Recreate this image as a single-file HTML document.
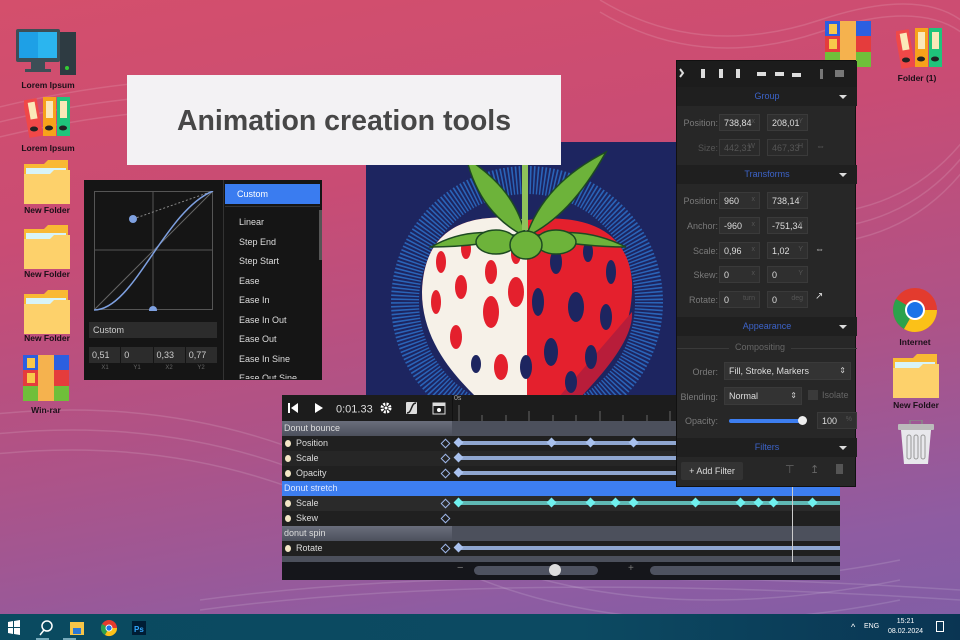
<!DOCTYPE html>
<html><head><meta charset="utf-8"><style>
*{margin:0;padding:0;box-sizing:border-box}
body{width:960px;height:640px;overflow:hidden;position:relative;font-family:"Liberation Sans",sans-serif;
background:linear-gradient(170deg,#d44f6c 0%,#c94c74 30%,#ad5388 60%,#8e5ca2 85%,#7f5ea6 100%)}
.a{position:absolute}
.lbl{position:absolute;font-size:8.5px;font-weight:bold;color:#1a0f18;text-align:center;width:80px;white-space:nowrap}
.dk{background:#151515}
.rp .l{position:absolute;left:0;width:41px;text-align:right;font-size:9px;color:#7a7a7a}
.in{position:absolute;height:17px;background:#2f2f2f;border:1px solid #3a3a3a;font-size:9px;color:#ddd;padding:3px 4px}
.in span{position:absolute;right:4px;top:3px;color:#555;font-size:7px}
.hd{position:absolute;left:0;width:180px;height:19px;background:#1f1f1f;color:#3c63c8;font-size:9px;text-align:center;line-height:19px}
.hd:after{content:"";position:absolute;right:10px;top:8px;border:4px solid transparent;border-top:4px solid #ddd}
.row{position:absolute;left:0;width:558px;height:15px}
.row .n{position:absolute;left:0;width:170px;height:15px;font-size:9px;color:#ddd;line-height:15px;padding-left:14px}
.row .n i{position:absolute;left:3px;top:4px;width:6px;height:7px;border-radius:50%;background:#f3e6c6}
.row .d{position:absolute;left:160px;top:4px;width:7px;height:7px;border:1.5px solid #9fb7e8;transform:rotate(45deg)}
.grp .n{background:linear-gradient(#6a6e7c,#4c505c);padding-left:2px}
.kf{position:absolute;width:7px;height:7px;transform:rotate(45deg);background:#a9c1ee}
.ease div{height:19.5px;line-height:19.5px;font-size:9px;color:#ddd;padding-left:14px}
</style></head><body>

<svg class="a" style="left:0;top:0" width="960" height="614">
<g fill="none" stroke="#fff" stroke-opacity="0.13" stroke-width="1.5">
<path d="M-50 120 Q300 20 600 160 T1000 80"/><path d="M-50 135 Q300 35 600 175 T1000 95"/>
<path d="M-50 150 Q300 50 600 190 T1000 110"/><path d="M-50 420 Q200 380 400 500 T900 560"/>
<path d="M-50 440 Q200 400 400 520 T900 580"/><path d="M-50 460 Q200 420 400 540 T900 600"/>
<path d="M600 0 Q700 60 820 20 T980 40"/><path d="M600 12 Q700 72 820 32 T980 52"/>
<path d="M200 600 Q500 560 960 590"/><path d="M200 610 Q500 570 960 600"/>
</g></svg>

<svg class="a" style="left:16px;top:27px" width="62" height="50">
<rect x="0" y="2" width="44" height="33" rx="2" fill="#3d4e56"/><rect x="3" y="5" width="38" height="26" fill="#1ea0e6"/><rect x="22" y="5" width="19" height="26" fill="#2bb5ef"/>
<rect x="15" y="35" width="14" height="8" fill="#3d4e56"/><rect x="9" y="42" width="26" height="3" fill="#3d4e56"/>
<rect x="44" y="5" width="16" height="43" fill="#2e3b42"/><circle cx="51" cy="41" r="2" fill="#3c3"/></svg>
<div class="lbl" style="left:8px;top:80px">Lorem Ipsum</div>
<svg class="a" style="left:24px;top:96px" width="50" height="42">
<rect x="2" y="3" width="14" height="38" fill="#f04848" transform="rotate(-10 9 22)"/><rect x="19" y="1" width="13" height="39" fill="#f7a21b"/><rect x="33" y="1" width="13" height="39" fill="#1fc47b"/>
<rect x="22" y="5" width="7" height="17" fill="#fbe8b8"/><rect x="36" y="5" width="7" height="17" fill="#fbe8b8"/><rect x="5" y="6" width="7" height="17" fill="#fbe8b8" transform="rotate(-10 9 14)"/>
<ellipse cx="25" cy="32" rx="4" ry="2.5" fill="#222"/><ellipse cx="39" cy="32" rx="4" ry="2.5" fill="#222"/><ellipse cx="10" cy="33" rx="4" ry="2.5" fill="#222"/></svg>
<div class="lbl" style="left:8px;top:143px">Lorem Ipsum</div>
<svg class="a" style="left:24px;top:160px" width="46" height="44"><path d="M0 4h20l4-4h20v42H0z" fill="#f9b934"/><rect x="2" y="8" width="40" height="8" fill="#d8f4f8"/><path d="M0 14h26l4-4h16v34H0z" fill="#fdd16b"/></svg>
<div class="lbl" style="left:7px;top:205px">New Folder</div>
<svg class="a" style="left:24px;top:225px" width="46" height="44"><path d="M0 4h20l4-4h20v42H0z" fill="#f9b934"/><rect x="2" y="8" width="40" height="8" fill="#d8f4f8"/><path d="M0 14h26l4-4h16v34H0z" fill="#fdd16b"/></svg>
<div class="lbl" style="left:7px;top:269px">New Folder</div>
<svg class="a" style="left:24px;top:290px" width="46" height="44"><path d="M0 4h20l4-4h20v42H0z" fill="#f9b934"/><rect x="2" y="8" width="40" height="8" fill="#d8f4f8"/><path d="M0 14h26l4-4h16v34H0z" fill="#fdd16b"/></svg>
<div class="lbl" style="left:7px;top:333px">New Folder</div>
<svg class="a" style="left:23px;top:355px" width="46" height="46"><rect width="46" height="15" fill="#2c5fe0"/><rect y="15" width="46" height="16" fill="#e53c3c"/><rect y="31" width="46" height="15" fill="#6fbf3a"/><rect x="15" width="16" height="46" fill="#f5b24e"/><rect x="4" y="3" width="8" height="10" fill="#f8c84a"/><rect x="4" y="18" width="8" height="10" fill="#f8c84a"/></svg>
<div class="lbl" style="left:6px;top:405px">Win-rar</div>

<svg class="a" style="left:825px;top:21px" width="46" height="46"><rect width="46" height="15" fill="#2c5fe0"/><rect y="15" width="46" height="16" fill="#e53c3c"/><rect y="31" width="46" height="15" fill="#6fbf3a"/><rect x="15" width="16" height="46" fill="#f5b24e"/><rect x="4" y="3" width="8" height="10" fill="#f8c84a"/><rect x="4" y="18" width="8" height="10" fill="#f8c84a"/></svg>
<svg class="a" style="left:896px;top:27px" width="50" height="42">
<rect x="2" y="3" width="14" height="38" fill="#f04848" transform="rotate(-10 9 22)"/><rect x="19" y="1" width="13" height="39" fill="#f7a21b"/><rect x="33" y="1" width="13" height="39" fill="#1fc47b"/>
<rect x="22" y="5" width="7" height="17" fill="#fbe8b8"/><rect x="36" y="5" width="7" height="17" fill="#fbe8b8"/><rect x="5" y="6" width="7" height="17" fill="#fbe8b8" transform="rotate(-10 9 14)"/>
<ellipse cx="25" cy="32" rx="4" ry="2.5" fill="#222"/><ellipse cx="39" cy="32" rx="4" ry="2.5" fill="#222"/><ellipse cx="10" cy="33" rx="4" ry="2.5" fill="#222"/></svg>
<div class="lbl" style="left:877px;top:73px">Folder (1)</div>
<svg class="a" style="left:892px;top:287px" width="46" height="46"><circle cx="23" cy="23" r="22" fill="#e33b2e"/><path d="M23 23L4 12A22 22 0 0 0 12 42z" fill="#2ba24c"/><path d="M23 23L12 42A22 22 0 0 0 45 23z" fill="#fbc118"/><circle cx="23" cy="23" r="10" fill="#fff"/><circle cx="23" cy="23" r="8" fill="#1a73e8"/></svg>
<div class="lbl" style="left:875px;top:337px">Internet</div>
<svg class="a" style="left:893px;top:354px" width="46" height="44"><path d="M0 4h20l4-4h20v42H0z" fill="#f9b934"/><rect x="2" y="8" width="40" height="8" fill="#d8f4f8"/><path d="M0 14h26l4-4h16v34H0z" fill="#fdd16b"/></svg>
<div class="lbl" style="left:876px;top:400px">New Folder</div>
<svg class="a" style="left:897px;top:420px" width="40" height="45"><rect x="13" y="0" width="12" height="5" fill="none" stroke="#888" stroke-width="1.5"/><rect x="1" y="4" width="36" height="6" rx="1" fill="#bbb"/><path d="M4 10h30l-3 34H7z" fill="#e8e8ec"/><rect x="10" y="15" width="4" height="24" rx="2" fill="none" stroke="#999"/><rect x="17" y="15" width="4" height="24" rx="2" fill="none" stroke="#999"/><rect x="24" y="15" width="4" height="24" rx="2" fill="none" stroke="#999"/></svg>

<svg class="a" style="left:366px;top:142px" width="310" height="255">
<rect width="310" height="255" fill="#1d2560"/>
<circle cx="161" cy="160" r="122" fill="none" stroke="#2d70c8" stroke-width="28" stroke-dasharray="1.5 2" opacity="0.85"/>
<path d="M161 78 C110 70 58 80 56 150 C56 210 110 255 130 270 L200 270 C230 240 268 200 266 140 C262 82 210 72 161 78z" fill="#e4202d"/>
<path d="M161 78 C110 70 58 80 56 150 C56 200 90 235 110 255 L161 255z" fill="#f6f1e8"/>
<path d="M200 270 C230 240 268 200 266 170 L180 270z" fill="#b81d3a"/>
<g fill="#e4202d"><ellipse cx="75" cy="120" rx="5" ry="11"/><ellipse cx="100" cy="107" rx="5" ry="10"/><ellipse cx="70" cy="160" rx="5" ry="12"/><ellipse cx="95" cy="145" rx="6" ry="12"/><ellipse cx="125" cy="130" rx="6" ry="12"/><ellipse cx="150" cy="112" rx="5" ry="10"/><ellipse cx="125" cy="170" rx="8" ry="16"/><ellipse cx="90" cy="195" rx="6" ry="12"/><ellipse cx="135" cy="225" rx="7" ry="13"/><ellipse cx="150" cy="150" rx="8" ry="15"/></g>
<g fill="#1d2560"><ellipse cx="190" cy="120" rx="6" ry="12"/><ellipse cx="222" cy="110" rx="5" ry="10"/><ellipse cx="245" cy="130" rx="5" ry="12"/><ellipse cx="172" cy="160" rx="6" ry="14"/><ellipse cx="210" cy="165" rx="8" ry="15"/><ellipse cx="240" cy="175" rx="6" ry="13"/><ellipse cx="185" cy="210" rx="7" ry="14"/><ellipse cx="225" cy="215" rx="6" ry="12"/><ellipse cx="160" cy="225" rx="6" ry="12"/><ellipse cx="110" cy="222" rx="5" ry="9"/><ellipse cx="205" cy="240" rx="6" ry="11"/></g>
<g fill="#6db33a" stroke="#1d4a22" stroke-width="1.5">
<path d="M160 95 C130 80 110 55 100 15 C120 30 150 50 160 95z"/><path d="M160 95 C190 80 215 55 240 10 C210 25 175 50 160 95z"/>
<path d="M160 95 C130 90 100 85 65 105 C100 105 130 100 160 95z"/><path d="M160 95 C190 90 220 85 260 105 C225 105 190 100 160 95z"/>
<ellipse cx="130" cy="100" rx="20" ry="12"/><ellipse cx="190" cy="100" rx="20" ry="12"/><ellipse cx="160" cy="103" rx="16" ry="14"/></g>
<rect x="156" y="0" width="6" height="88" fill="#8fc25a"/>
</svg>

<div class="a" style="left:127px;top:75px;width:434px;height:90px;background:#f3f2f4;font-size:28.5px;font-weight:bold;color:#474747;text-align:center;line-height:92px">Animation creation tools</div>

<div class="a dk" style="left:84px;top:180px;width:238px;height:200px">
<svg class="a" style="left:10px;top:11px" width="120" height="120">
<rect x="0.5" y="0.5" width="118" height="118" fill="none" stroke="#555"/><line x1="59" y1="0" x2="59" y2="119" stroke="#555"/><line x1="0" y1="59" x2="119" y2="59" stroke="#555"/>
<line x1="0" y1="119" x2="119" y2="0" stroke="#666"/><line x1="39" y1="28" x2="119" y2="0" stroke="#888" stroke-dasharray="2 2"/>
<path d="M0 119 C40 119 70 20 119 0" fill="none" stroke="#7ea0e0" stroke-width="1.5"/>
<circle cx="39" cy="28" r="4" fill="#7ea0e0"/><circle cx="59" cy="119" r="4" fill="#7ea0e0"/></svg>
<div class="a" style="left:5px;top:142px;width:128px;height:16px;background:#2c2c2c;font-size:9px;color:#ccc;padding:3px 4px">Custom</div>
<div class="a" style="left:5px;top:167px;width:128px;height:16px;background:#2c2c2c;font-size:9px;color:#ccc;display:flex"><span style="flex:1;padding:3px;border-right:1px solid #151515">0,51</span><span style="flex:1;padding:3px;border-right:1px solid #151515">0</span><span style="flex:1;padding:3px;border-right:1px solid #151515">0,33</span><span style="flex:1;padding:3px">0,77</span></div>
<div class="a" style="left:5px;top:185px;width:128px;font-size:6px;color:#666;display:flex;text-align:center"><span style="flex:1">X1</span><span style="flex:1">Y1</span><span style="flex:1">X2</span><span style="flex:1">Y2</span></div>
<div class="a" style="left:139px;top:0;width:1px;height:200px;background:#333"></div>
<div class="a" style="left:141px;top:4px;width:95px;height:20px;background:#3a7cf0;color:#fff;font-size:9px;line-height:20px;padding-left:12px">Custom</div>
<div class="a" style="left:141px;top:26px;width:95px;height:1px;background:#333"></div>
<div class="a ease" style="left:141px;top:33px;width:95px"><div>Linear</div><div>Step End</div><div>Step Start</div><div>Ease</div><div>Ease In</div><div>Ease In Out</div><div>Ease Out</div><div>Ease In Sine</div><div style="height:10px;overflow:hidden">Ease Out Sine</div></div>
<div class="a" style="left:235px;top:30px;width:3px;height:50px;background:#555"></div>
</div>

<div class="a" style="left:282px;top:395px;width:558px;height:185px;background:#1c1c1c;overflow:hidden">
<svg class="a" style="left:0;top:0" width="170" height="26" fill="#fff">
<rect x="6" y="8" width="2" height="10"/><path d="M16 8v10l-7-5z"/><path d="M33 8v10l8-5z"/>
<text x="54" y="17.5" font-size="11" fill="#ddd" font-family="Liberation Sans">0:01.33</text>
<circle cx="104" cy="13" r="4" fill="none" stroke="#fff" stroke-width="3" stroke-dasharray="2 1.2"/><circle cx="104" cy="13" r="1.5"/>
<rect x="124" y="7" width="11" height="12" rx="1" fill="#ddd"/><path d="M125 18C130 18 129 8 134 8" stroke="#222" fill="none" stroke-width="1.5"/>
<rect x="151" y="8" width="12" height="11" fill="none" stroke="#ddd"/><rect x="151" y="8" width="12" height="3" fill="#ddd"/><circle cx="157" cy="15" r="2"/>
</svg>
<div class="a" style="left:170px;top:0;width:1px;height:185px;background:#111"></div>
<div class="a" style="left:172px;top:0;font-size:7px;color:#aaa">0s</div>
<svg class="a" style="left:170px;top:0" width="390" height="26" stroke="#666"><line x1="7" y1="10" x2="7" y2="26"/><line x1="30" y1="20" x2="30" y2="26"/><line x1="54" y1="20" x2="54" y2="26"/><line x1="77" y1="16" x2="77" y2="26"/><line x1="101" y1="20" x2="101" y2="26"/><line x1="124" y1="20" x2="124" y2="26"/><line x1="148" y1="16" x2="148" y2="26"/><line x1="171" y1="20" x2="171" y2="26"/><line x1="195" y1="20" x2="195" y2="26"/><line x1="218" y1="16" x2="218" y2="26"/></svg>
<div class="row grp" style="top:26px;background:#4c505c"><div class="n">Donut bounce</div></div>
<div class="row" style="top:41px;background:#202020"><div class="n"><i></i>Position</div><div class="d"></div></div>
<div class="row" style="top:56px;background:#262626"><div class="n"><i></i>Scale</div><div class="d"></div></div>
<div class="row" style="top:71px;background:#202020"><div class="n"><i></i>Opacity</div><div class="d"></div></div>
<div class="row grp" style="top:86px;background:#3d7ef0"><div class="n" style="background:#3d7ef0;color:#dfe8ff">Donut stretch</div></div>
<div class="row" style="top:101px;background:#2a2a2a"><div class="n"><i></i>Scale</div><div class="d"></div></div>
<div class="row" style="top:116px;background:#202020"><div class="n"><i></i>Skew</div><div class="d"></div></div>
<div class="row grp" style="top:131px;background:#4c505c"><div class="n">donut spin</div></div>
<div class="row" style="top:146px;background:#202020"><div class="n"><i></i>Rotate</div><div class="d"></div></div>
<div class="row grp" style="top:161px;height:6px;background:#4c505c"></div>
<div class="a" style="left:176px;top:46px;width:400px;height:4px;background:#8fa6d0"></div>
<div class="a" style="left:176px;top:61px;width:400px;height:4px;background:#8fa6d0"></div>
<div class="a" style="left:176px;top:76px;width:400px;height:4px;background:#8fa6d0"></div>
<div class="a" style="left:176px;top:106px;width:390px;height:4px;background:#5fb8b4"></div>
<div class="a" style="left:176px;top:151px;width:390px;height:4px;background:#8fa6d0"></div>
<div class="kf" style="left:173px;top:44px"></div><div class="kf" style="left:266px;top:44px"></div><div class="kf" style="left:305px;top:44px"></div><div class="kf" style="left:348px;top:44px"></div>
<div class="kf" style="left:173px;top:59px"></div><div class="kf" style="left:173px;top:74px"></div><div class="kf" style="left:173px;top:149px"></div>
<div class="kf" style="left:173px;top:104px;background:#6ff0ee"></div><div class="kf" style="left:266px;top:104px;background:#6ff0ee"></div><div class="kf" style="left:305px;top:104px;background:#6ff0ee"></div><div class="kf" style="left:330px;top:104px;background:#6ff0ee"></div><div class="kf" style="left:348px;top:104px;background:#6ff0ee"></div><div class="kf" style="left:410px;top:104px;background:#6ff0ee"></div><div class="kf" style="left:455px;top:104px;background:#6ff0ee"></div><div class="kf" style="left:473px;top:104px;background:#6ff0ee"></div><div class="kf" style="left:488px;top:104px;background:#6ff0ee"></div><div class="kf" style="left:527px;top:104px;background:#6ff0ee"></div>
<div class="a" style="left:510px;top:92px;width:1px;height:75px;background:#ccc"></div>
<div class="a" style="left:0;top:167px;width:558px;height:18px;background:#15161b"></div>
<div class="a" style="left:175px;top:167px;color:#777;font-size:11px">−</div>
<div class="a" style="left:192px;top:171px;width:124px;height:9px;border-radius:5px;background:#4e5260"></div>
<div class="a" style="left:267px;top:169px;width:12px;height:12px;border-radius:50%;background:#ddd"></div>
<div class="a" style="left:346px;top:168px;color:#777;font-size:10px">+</div>
<div class="a" style="left:368px;top:171px;width:200px;height:9px;border-radius:5px;background:#4e5260"></div>
</div>

<div class="a rp" style="left:676px;top:60px;width:180px;height:427px;background:#272727;border:1px solid #111">
<div class="a" style="left:0;top:0;width:180px;height:26px;background:#1c1c1c"></div>
<svg class="a" style="left:0;top:4px" width="180" height="18" fill="#ddd"><path d="M3 4l3 4-3 4" stroke="#ddd" fill="none" stroke-width="2"/>
<rect x="24" y="4" width="4" height="9"/><rect x="42" y="4" width="4" height="9"/><rect x="59" y="4" width="4" height="9"/>
<rect x="80" y="7" width="9" height="4"/><rect x="98" y="7" width="9" height="4"/><rect x="115" y="8" width="9" height="4"/>
<rect x="143" y="4" width="3" height="10" fill="#777"/><rect x="158" y="5" width="9" height="7" fill="#777"/></svg>
<div class="hd" style="top:26px">Group</div>
<div class="l" style="top:57px">Position:</div><div class="in" style="left:42px;top:53px;width:41px">738,84<span>x</span></div><div class="in" style="left:90px;top:53px;width:41px">208,01<span>Y</span></div>
<div class="l" style="top:82px;color:#555">Size:</div><div class="in" style="left:42px;top:78px;width:41px;color:#555;background:#2a2a2a">442,31<span>W</span></div><div class="in" style="left:90px;top:78px;width:41px;color:#555;background:#2a2a2a">467,33<span>H</span></div><div class="a" style="left:139px;top:80px;font-size:9px;color:#666">⇔</div>
<div class="hd" style="top:104px">Transforms</div>
<div class="l" style="top:135px">Position:</div><div class="in" style="left:42px;top:131px;width:41px">960<span>x</span></div><div class="in" style="left:90px;top:131px;width:41px">738,14<span>Y</span></div>
<div class="l" style="top:160px">Anchor:</div><div class="in" style="left:42px;top:156px;width:41px">-960<span>x</span></div><div class="in" style="left:90px;top:156px;width:41px">-751,34<span>Y</span></div>
<div class="l" style="top:185px">Scale:</div><div class="in" style="left:42px;top:181px;width:41px">0,96<span>x</span></div><div class="in" style="left:90px;top:181px;width:41px">1,02<span>Y</span></div><div class="a" style="left:138px;top:183px;font-size:9px;color:#ddd">⇔</div>
<div class="l" style="top:209px">Skew:</div><div class="in" style="left:42px;top:205px;width:41px">0<span>x</span></div><div class="in" style="left:90px;top:205px;width:41px">0<span>Y</span></div>
<div class="l" style="top:234px">Rotate:</div><div class="in" style="left:42px;top:230px;width:41px">0<span>turn</span></div><div class="in" style="left:90px;top:230px;width:41px">0<span>deg</span></div><div class="a" style="left:138px;top:230px;font-size:10px;color:#ddd">↗</div>
<div class="hd" style="top:256px">Appearance</div>
<div class="a" style="left:0;top:287px;width:180px;height:1px;background:#3a3a3a"></div>
<div class="a" style="left:52px;top:281px;padding:0 6px;background:#272727;font-size:9px;color:#666">Compositing</div>
<div class="l" style="top:306px">Order:</div><div class="in" style="left:47px;top:301px;width:127px;height:18px;background:#333">Fill, Stroke, Markers<span style="color:#ccc;font-size:8px">⇕</span></div>
<div class="l" style="top:331px">Blending:</div><div class="in" style="left:47px;top:326px;width:78px;height:18px;background:#333">Normal<span style="color:#ccc;font-size:8px">⇕</span></div>
<div class="a" style="left:131px;top:329px;width:10px;height:10px;background:#3a3a3a"></div><div class="a" style="left:145px;top:329px;font-size:9px;color:#666">Isolate</div>
<div class="l" style="top:355px">Opacity:</div>
<div class="a" style="left:52px;top:358px;width:75px;height:4px;border-radius:2px;background:#3d7ef0"></div>
<div class="a" style="left:121px;top:355px;width:9px;height:9px;border-radius:50%;background:#eee"></div>
<div class="in" style="left:140px;top:351px;width:40px">100<span>%</span></div>
<div class="hd" style="top:377px">Filters</div>
<div class="a" style="left:4px;top:401px;width:62px;height:18px;background:#333;border-radius:2px;font-size:9px;color:#ddd;line-height:18px;text-align:center">+ Add Filter</div>
<div class="a" style="left:108px;top:402px;font-size:11px;color:#666">⊤</div><div class="a" style="left:133px;top:402px;font-size:11px;color:#666">↥</div><div class="a" style="left:159px;top:403px;width:7px;height:10px;background:#555"></div>
</div>

<div class="a" style="left:0;top:614px;width:960px;height:26px;background:linear-gradient(90deg,#0a4a60,#0c4a62 60%,#0a3553)">
<svg class="a" style="left:6px;top:5px" width="160" height="18">
<path d="M2 3l5-1v6H2zM8 2l6-1v7H8zM2 9h5v6l-5-1zM8 9h6v7l-6-1z" fill="#fff"/>
<circle cx="41" cy="7" r="5" fill="none" stroke="#fff" stroke-width="1.5"/><line x1="38" y1="11" x2="34" y2="16" stroke="#fff" stroke-width="1.5"/>
<rect x="64" y="3" width="14" height="13" fill="#f6c548"/><rect x="67" y="9" width="8" height="6" fill="#2b78d6"/>
<circle cx="103" cy="9" r="8" fill="#e33b2e"/><path d="M103 9L96 5A8 8 0 0 0 99 16z" fill="#2ba24c"/><path d="M103 9L99 16A8 8 0 0 0 111 9z" fill="#fbc118"/><circle cx="103" cy="9" r="3.5" fill="#fff"/><circle cx="103" cy="9" r="2.6" fill="#1a73e8"/>
<rect x="126" y="2" width="14" height="14" fill="#001d34"/><text x="128" y="13" font-size="8" fill="#31a8ff" font-family="Liberation Sans" font-weight="bold">Ps</text>
</svg>
<div class="a" style="left:36px;top:24px;width:13px;height:2px;background:#7ab"></div>
<div class="a" style="left:63px;top:24px;width:13px;height:2px;background:#7ab"></div>
<div class="a" style="left:851px;top:8px;font-size:9px;color:#fff">^</div>
<div class="a" style="left:864px;top:9px;font-size:7px;color:#fff">ENG</div>
<div class="a" style="left:888px;top:3px;font-size:7px;color:#fff;text-align:center;line-height:10px">15:21<br>08.02.2024</div>
<div class="a" style="left:936px;top:7px;width:8px;height:11px;border:1px solid #fff"></div>
</div>
</body></html>
